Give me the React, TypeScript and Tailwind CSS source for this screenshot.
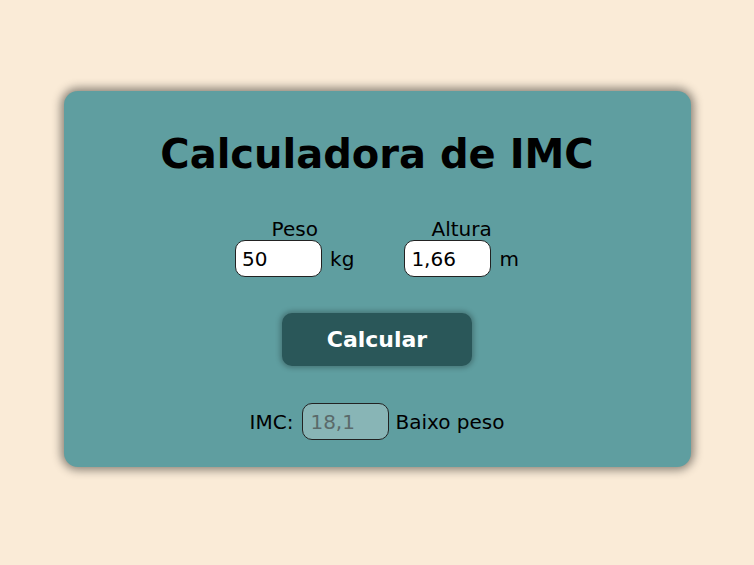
import React from 'react';

const font = { fontFamily: '"DejaVu Sans", Verdana, sans-serif' };

const Campo = ({ label, value, unit }: { label: string; value: string; unit: string }) => (
  <div className="flex flex-col items-center">
    <span className="text-[20px] leading-[22px] text-black">{label}</span>
    <div className="flex flex-row items-center gap-2">
      <input
        defaultValue={value}
        className="w-[87px] h-[37px] bg-white border border-[#222] rounded-[10px] px-[6px] text-[20px] text-black outline-none"
        style={font}
      />
      <span className="text-[20px] text-black">{unit}</span>
    </div>
  </div>
);

export default function App() {
  return (
    <div className="min-h-screen bg-[#faebd7] pt-[91px]" style={font}>
      <div className="mx-auto w-[627px] h-[376px] bg-[#5f9ea0] rounded-[14px] shadow-[0_0_10px_3px_rgba(0,0,0,0.45)] flex flex-col items-center">
        <h1 className="mt-[37px] text-[40px] leading-[52px] font-bold text-black">Calculadora de IMC</h1>
        <div className="mt-[38px] flex flex-row gap-[50px]">
          <Campo label="Peso" value="50" unit="kg" />
          <Campo label="Altura" value="1,66" unit="m" />
        </div>
        <button className="mt-[36px] w-[190px] h-[53px] bg-[#2a5759] rounded-[10px] text-white text-[22px] font-bold shadow-[0_0_5px_2px_rgba(0,0,0,0.25)]">
          Calcular
        </button>
        <div className="mt-[37px] flex flex-row items-center">
          <span className="text-[20px] text-black">IMC:</span>
          <input
            readOnly
            defaultValue="18,1"
            className="ml-[9px] w-[87px] h-[37px] bg-[#88b5b6] border border-[#222] rounded-[10px] px-[7px] text-[20px] text-[#5a6a6a] outline-none"
            style={font}
          />
          <span className="ml-[6px] text-[20px] text-black">Baixo peso</span>
        </div>
      </div>
    </div>
  );
}
